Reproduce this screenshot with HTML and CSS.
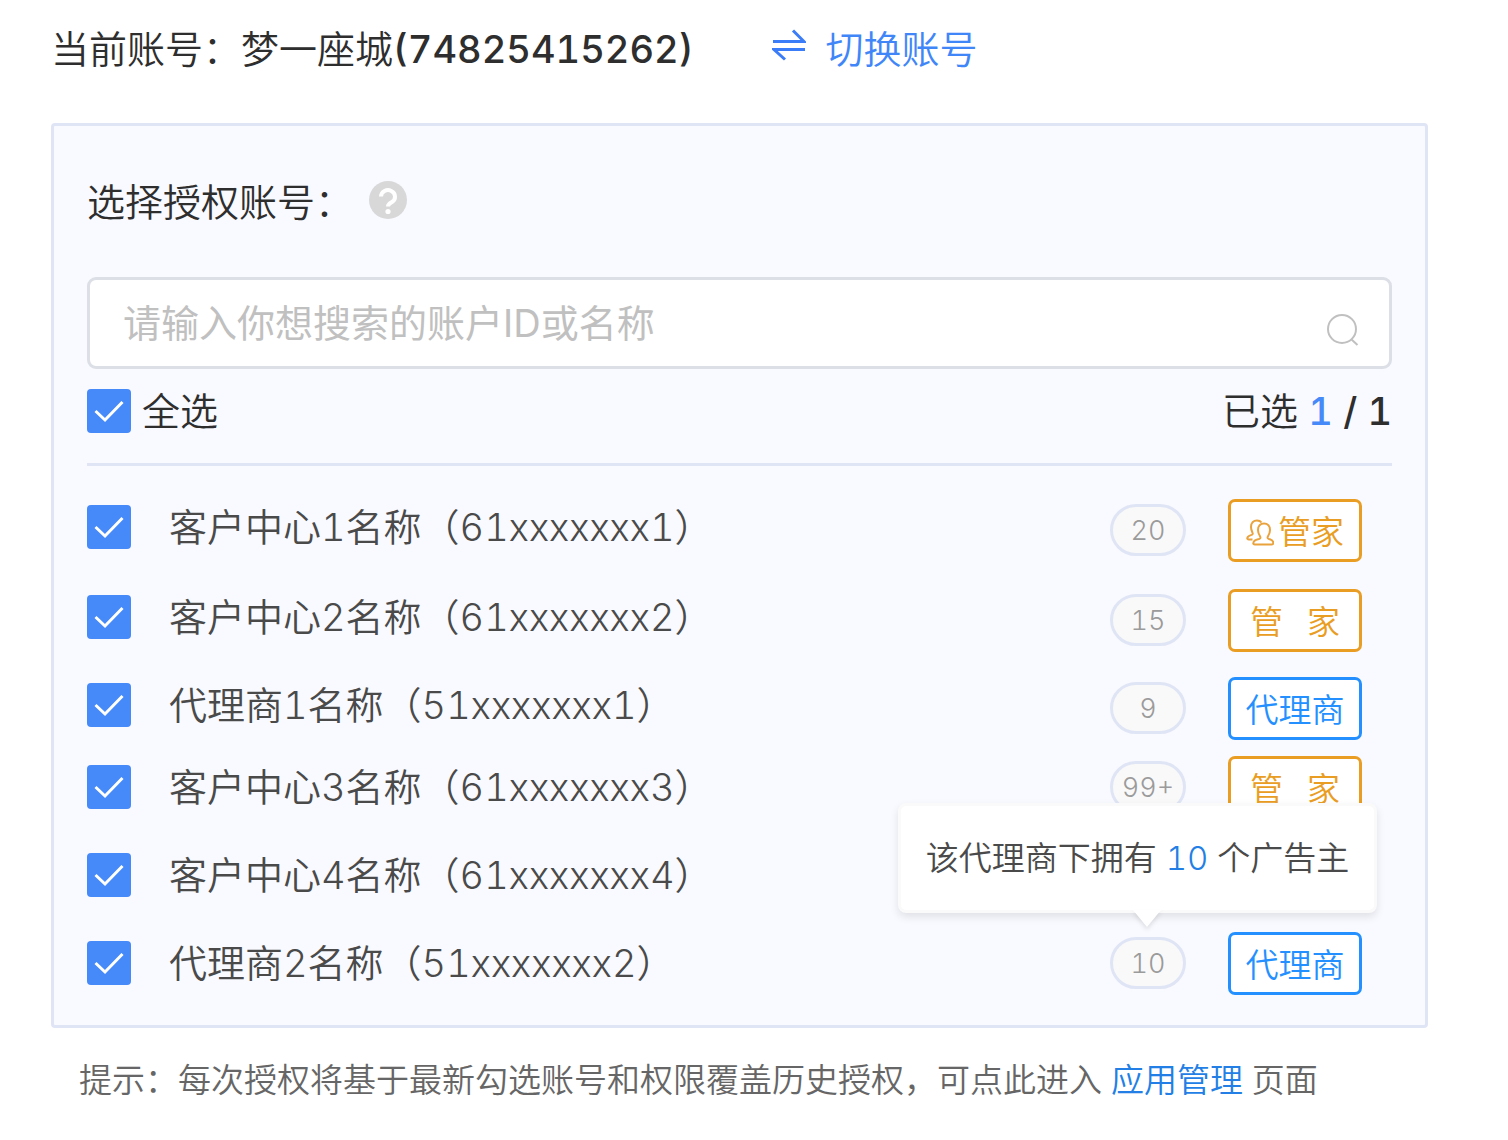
FILE: index.html
```html
<!DOCTYPE html>
<html lang="zh-CN">
<head>
<meta charset="utf-8">
<title>选择授权账号</title>
<link rel="stylesheet" href="styles.css">
</head>
<body>
<header class="account">
  <p class="account-current">当前账号：梦一座城<span class="account-id">(74825415262)</span></p>
  <a class="account-switch" href="#">
    <svg class="switch-icon" viewBox="0 0 34 32" aria-hidden="true"><path d="M1 12.500H32L21 1.500M33 20.500H2L13 30.500"/></svg>
    切换账号
  </a>
</header>
<main class="panel">
  <div class="panel-title">
    <h1 class="title-text">选择授权账号：</h1>
    <svg class="help-icon" viewBox="0 0 38 38" role="img" aria-label="帮助"><circle cx="19" cy="19" r="19"/><path d="M12 15.500a7 6.500 0 1 1 11 5.500c-2.500 1.600-4 2.200-4 4.500"/><circle class="help-dot" cx="19" cy="30.500" r="2.600"/></svg>
  </div>
  <div class="search">
    <input class="search-input" type="text" aria-label="搜索账户" placeholder="请输入你想搜索的账户ID或名称">
    <svg class="search-icon" viewBox="0 0 32 32" aria-hidden="true"><circle cx="15" cy="15" r="14"/><path d="M24 25l6.500 6"/></svg>
  </div>
  <div class="summary">
    <label class="select-all"><input class="check" type="checkbox" checked>全选</label>
    <p class="selected">已选 <span class="selected-numbers"><span class="selected-count">1</span> / 1</span></p>
  </div>
  <ul class="list">
    <li class="row row-low">
      <label class="name"><input class="check" type="checkbox" checked>客户中心1名称（61xxxxxxx1）</label>
      <div class="meta">
        <span class="count">20</span>
        <span class="tag tag-manager"><svg class="people-icon" viewBox="0 0 28 28" aria-hidden="true"><path d="M9 26.500c-1.500 0-2-.8-1.600-2 .7-2.300 3-3 5.600-3.500 1.500-.4 1.800-1.500 1-2.700C12.500 16 12 14 12 12c0-4 2.400-6.500 6-6.500s6 2.500 6 6.500c0 2-.5 4-2 6.300-.8 1.200-.5 2.300 1 2.700 2.200.5 3.900 1.200 4.300 3.500.2 1.200-.3 2-1.800 2z"/><path d="M6.500 21.500H3c-1.500 0-2-.8-1.600-1.800.6-1.700 2.300-2.300 4.100-2.800 1.300-.4 1.500-1.300.9-2.400C5.500 12.500 5 11 5 9c0-4 2.400-6.500 6-6.500 2 0 3.500.7 4.500 2"/></svg>管家</span>
      </div>
    </li>
    <li class="row row-low">
      <label class="name"><input class="check" type="checkbox" checked>客户中心2名称（61xxxxxxx2）</label>
      <div class="meta">
        <span class="count">15</span>
        <span class="tag tag-manager tag-spread"><span>管</span><span>家</span></span>
      </div>
    </li>
    <li class="row row-low">
      <label class="name"><input class="check" type="checkbox" checked>代理商1名称（51xxxxxxx1）</label>
      <div class="meta">
        <span class="count">9</span>
        <span class="tag tag-agent">代理商</span>
      </div>
    </li>
    <li class="row">
      <label class="name"><input class="check" type="checkbox" checked>客户中心3名称（61xxxxxxx3）</label>
      <div class="meta">
        <span class="count">99+</span>
        <span class="tag tag-manager tag-spread"><span>管</span><span>家</span></span>
      </div>
    </li>
    <li class="row">
      <label class="name"><input class="check" type="checkbox" checked>客户中心4名称（61xxxxxxx4）</label>
    </li>
    <li class="row">
      <label class="name"><input class="check" type="checkbox" checked>代理商2名称（51xxxxxxx2）</label>
      <div class="meta">
        <span class="count">10<span class="tooltip" role="tooltip">该代理商下拥有 <span class="tooltip-count">10</span> 个广告主</span></span>
        <span class="tag tag-agent">代理商</span>
      </div>
    </li>
  </ul>
</main>
<footer class="hint">提示：每次授权将基于最新勾选账号和权限覆盖历史授权，可点此进入 <a class="hint-link" href="#">应用管理</a> 页面</footer>
</body>
</html>
```
FILE: styles.css
```css
* {
  box-sizing: border-box;
}

body {
  margin: 0;
  padding: 23px 80px 32px 51px;
  background: #fff;
  color: #2e2e2e;
  font-family: Inter, "Noto Sans CJK SC", sans-serif;
  font-size: 38px;
  font-weight: 350;
  line-height: 52px;
  font-variant-numeric: tabular-nums;
}

p,
h1,
ul {
  margin: 0;
  padding: 0;
}

a {
  text-decoration: none;
}

.account {
  display: flex;
  align-items: center;
  gap: 78px;
  margin-bottom: 48px;
}

.account-id {
  font-weight: 500;
}

.account-switch {
  display: flex;
  align-items: center;
  gap: 20px;
  color: #4086f8;
}

.switch-icon {
  width: 34px;
  height: 32px;
  margin-bottom: 8px;
  fill: none;
  stroke: #3b7cf8;
  stroke-width: 3;
}

.panel {
  padding: 50px 33px 30px;
  border: 3px solid #dfe5f5;
  border-radius: 4px;
  background: #f9faff;
}

.panel-title {
  display: flex;
  align-items: center;
  gap: 16px;
  margin-bottom: 49px;
}

.title-text {
  font-size: 38px;
  font-weight: 350;
}

.help-icon {
  width: 38px;
  height: 38px;
  margin-bottom: 4px;
  fill: #d8d8d8;
}

.help-icon path {
  fill: none;
  stroke: #fff;
  stroke-width: 4;
}

.help-icon .help-dot {
  fill: #fff;
}

.search {
  display: flex;
  align-items: center;
  height: 92px;
  margin-bottom: 20px;
  padding: 0 30px 0 33px;
  border: 3px solid #dcdfe6;
  border-radius: 9px;
  background: #fff;
}

.search-input {
  flex: 1;
  min-width: 0;
  padding: 0;
  border: 0;
  outline: 0;
  background: none;
  color: #2e2e2e;
  font: inherit;
  font-weight: 400;
}

.search-input::placeholder {
  color: #c0c0c0;
  opacity: 1;
}

.search-icon {
  width: 32px;
  height: 32px;
  margin-top: 14px;
  fill: none;
  stroke: #c0c0c0;
  stroke-width: 2;
}

.summary {
  display: flex;
  align-items: center;
  justify-content: space-between;
  height: 77px;
  margin-bottom: 29px;
  padding-bottom: 30px;
  border-bottom: 3px solid #dfe5f5;
}

.select-all {
  display: flex;
  align-items: center;
  gap: 11px;
}

.selected-numbers {
  font-weight: 500;
}

.selected-count {
  color: #4689f8;
}

.check {
  flex: none;
  width: 44px;
  height: 44px;
  margin: 0;
  border-radius: 4px;
  appearance: none;
  background: #4689f8 url("data:image/svg+xml,%3Csvg xmlns='http://www.w3.org/2000/svg' viewBox='0 0 44 44'%3E%3Cpath d='M8.500 22L18 31 35.500 13' fill='none' stroke='white' stroke-width='3'/%3E%3C/svg%3E");
}

.list {
  display: grid;
  grid-template-rows: 90px 88px 82px 88px 88px 64px;
  list-style: none;
  color: #4a4a4a;
}

.row {
  display: flex;
  align-items: center;
  justify-content: space-between;
  height: 64px;
  padding-right: 30px;
}

.name {
  display: flex;
  align-items: center;
  gap: 38px;
}

.meta {
  display: flex;
  align-items: center;
  gap: 42px;
}

.row-low .meta {
  padding-top: 6px;
}

.count {
  position: relative;
  width: 76px;
  height: 52px;
  border: 3px solid #dfe5f5;
  border-radius: 26px;
  background: #f9f9f9;
  color: #9b9b9b;
  font-size: 27px;
  line-height: 48px;
  text-align: center;
}

.tag {
  display: flex;
  align-items: center;
  justify-content: center;
  gap: 4px;
  width: 134px;
  height: 63px;
  padding-top: 3px;
  border: 3px solid;
  border-radius: 7px;
  background: #fff;
  font-size: 33px;
}

.tag-spread {
  gap: 24px;
}

.tag-manager {
  border-color: #e99d22;
  color: #e99d22;
}

.tag-agent {
  border-color: #2490ff;
  color: #2490ff;
}

.people-icon {
  width: 28px;
  height: 28px;
  fill: none;
  stroke: #e9a23c;
  stroke-width: 2;
}

.tooltip {
  position: absolute;
  z-index: 1;
  bottom: 73px;
  left: -215px;
  width: 479px;
  height: 110px;
  border: 3px solid #fafafa;
  border-radius: 8px;
  background: #fff;
  box-shadow: 0 4px 8px rgba(0, 0, 0, 0.1);
  color: #4a4a4a;
  font-size: 33px;
  line-height: 104px;
  white-space: nowrap;
}

.tooltip::after {
  content: "";
  position: absolute;
  top: 104px;
  left: 232px;
  border: solid transparent;
  border-width: 17px 14px 0;
  border-top-color: #fff;
  filter: drop-shadow(0 3px 2px rgba(0, 0, 0, 0.1));
}

.tooltip-count {
  color: #237fe5;
}

.hint {
  margin-top: 28px;
  padding-left: 28px;
  color: #666;
  font-size: 33px;
  line-height: 48px;
}

.hint-link {
  color: #237fe5;
}
```
